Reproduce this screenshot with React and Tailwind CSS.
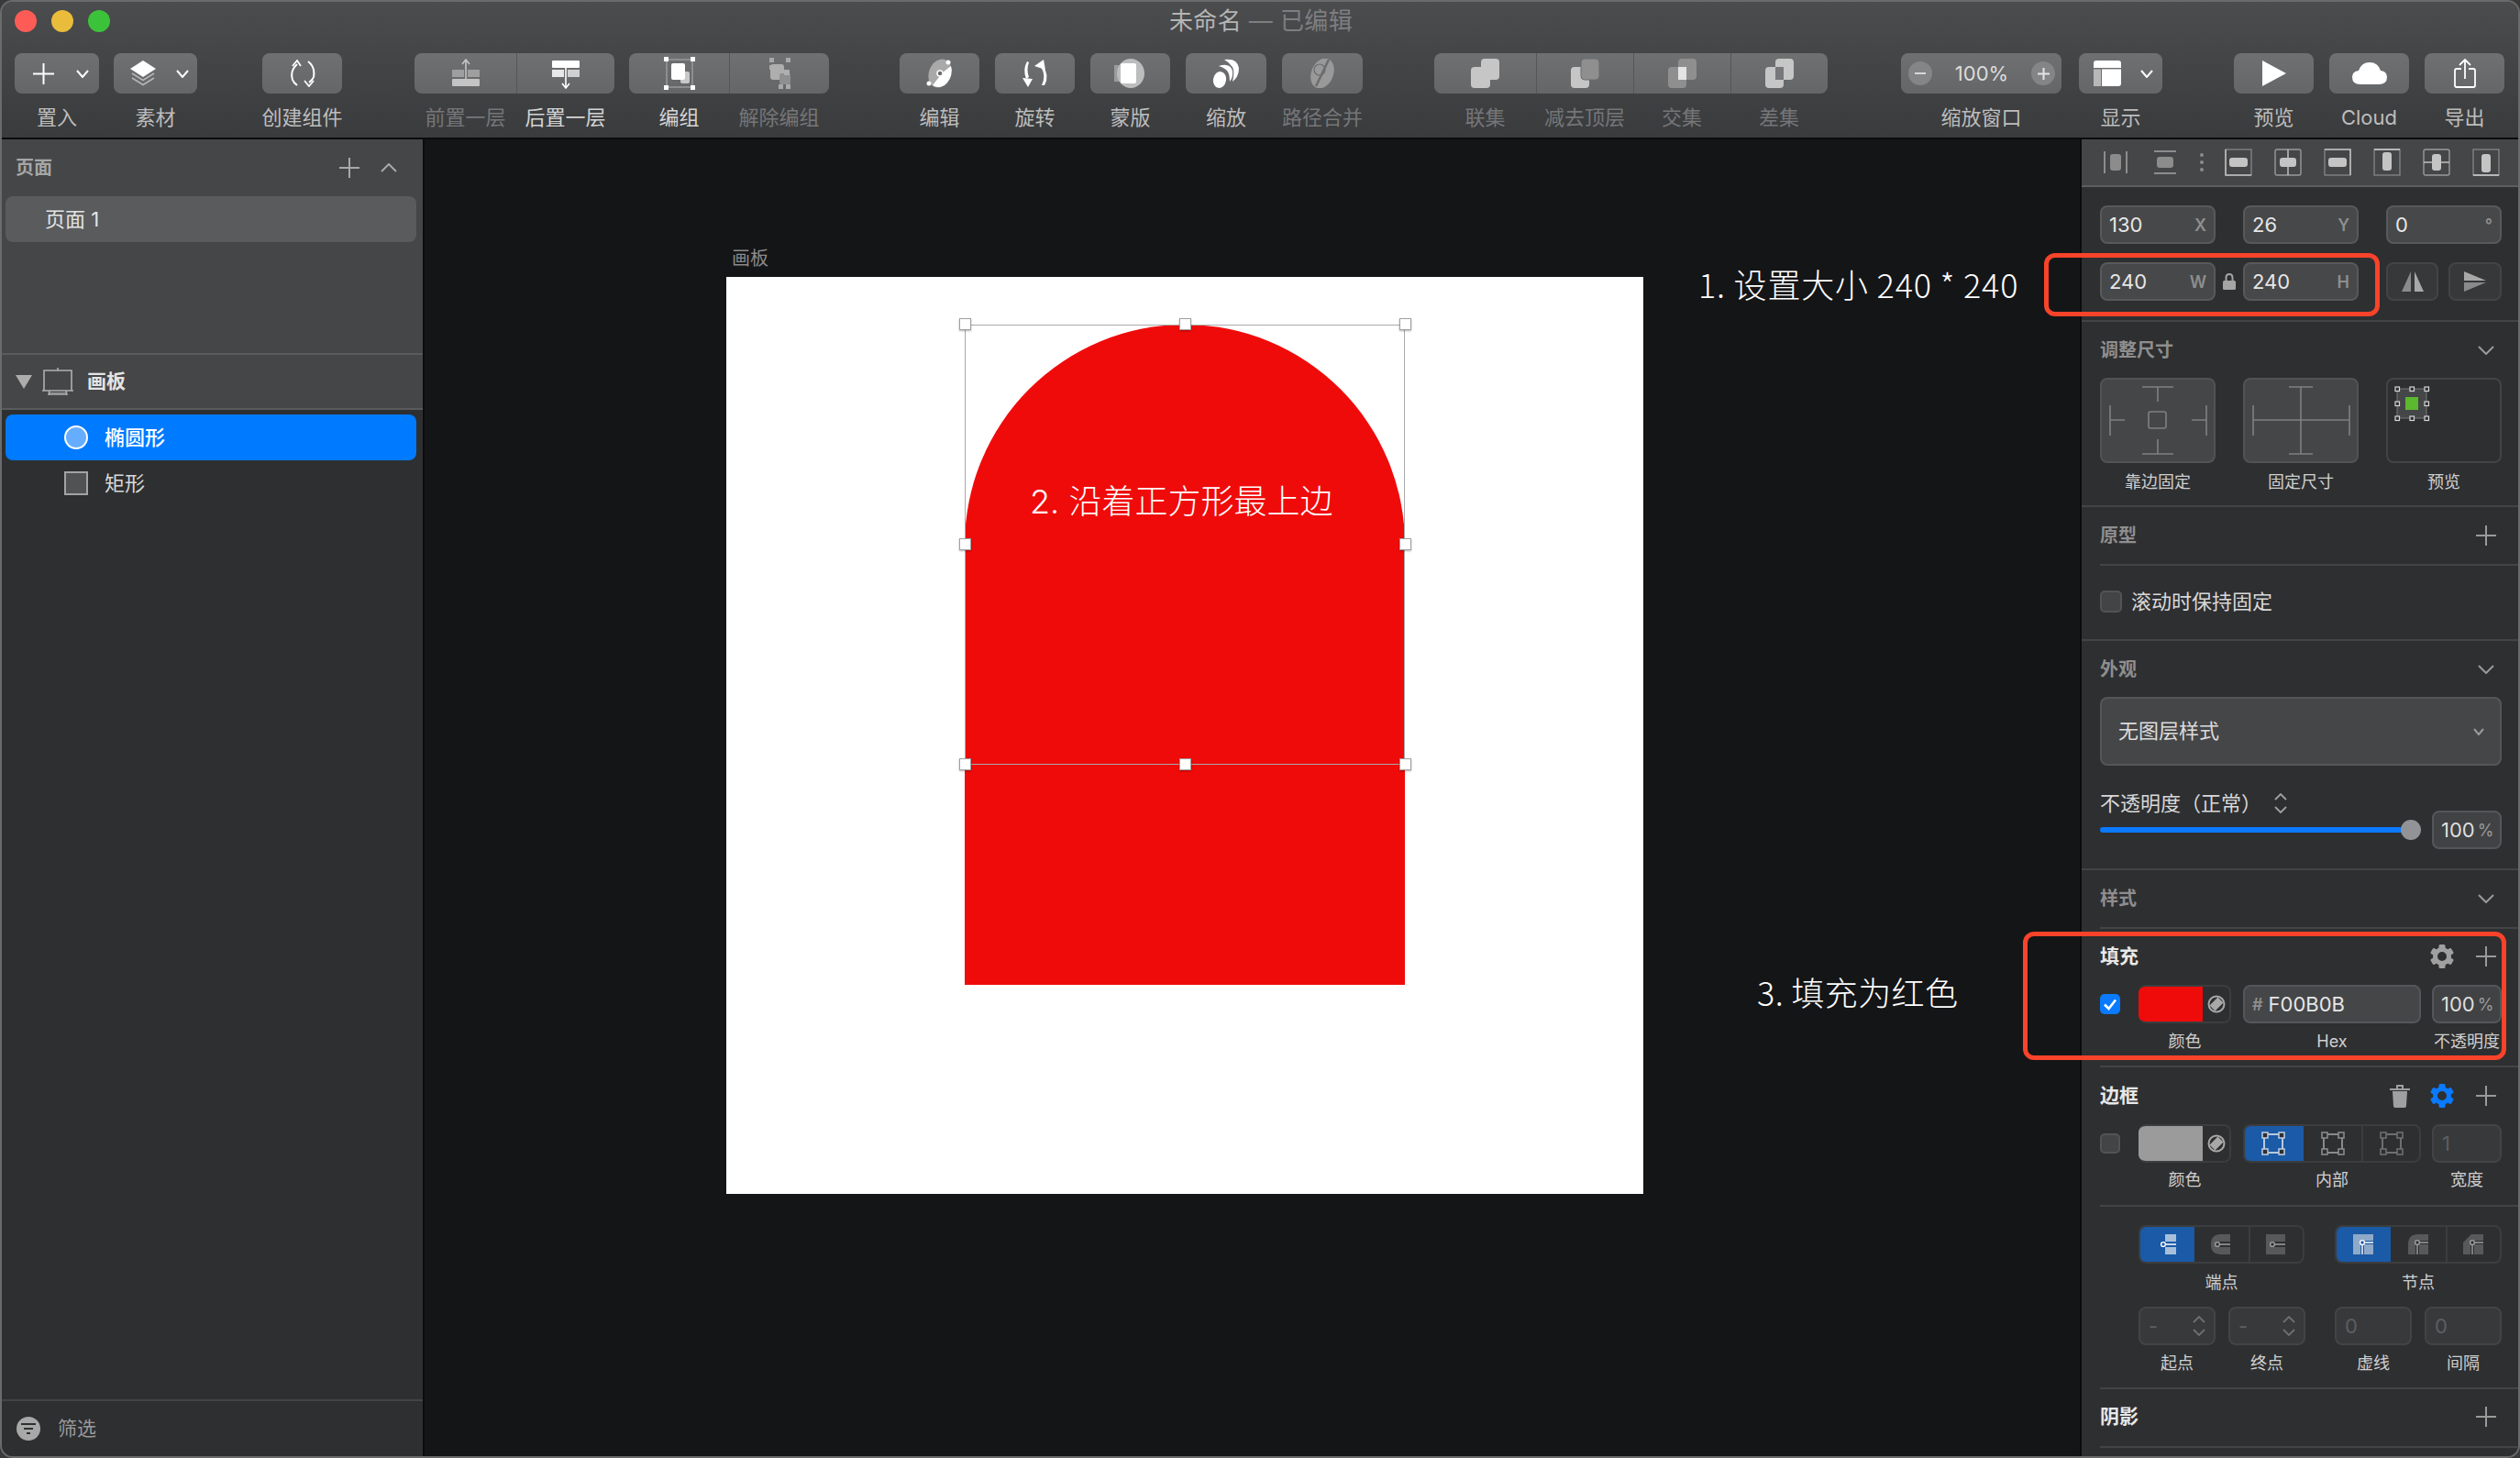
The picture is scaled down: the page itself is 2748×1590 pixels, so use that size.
import React from 'react';

const Svg = ({ s = 36, w, h, vb, children, className = '' }) => (
  <svg width={w || s} height={h || s} viewBox={vb || `0 0 ${w || s} ${h || s}`} fill="none" className={className}>{children}</svg>
);

const Plus = ({ c = '#a9a9a9', s = 22, sw = 2 }) => (
  <Svg s={s}><path d={`M${s / 2} 0V${s}M0 ${s / 2}H${s}`} stroke={c} strokeWidth={sw} /></Svg>
);
const PlusR = () => <div className="-mr-[2px] ml-[2px]"><Plus c="#9a9a9a" /></div>;
const Chev = ({ c = '#a9a9a9', w = 18, h = 10, sw = 2, up }) => (
  <Svg w={w} h={h}><path d={up ? `M1 ${h - 1}L${w / 2} 1L${w - 1} ${h - 1}` : `M1 1L${w / 2} ${h - 1}L${w - 1} 1`} stroke={c} strokeWidth={sw} /></Svg>
);
const UpDown = ({ c = '#a0a0a0' }) => (
  <Svg w={14} h={22}><path d="M1 7L7 1L13 7M1 15L7 21L13 15" stroke={c} strokeWidth="1.8" /></Svg>
);
const Gear = ({ c = '#a0a0a0' }) => (
  <Svg s={26}>
    <circle cx="13" cy="13" r="7.5" stroke={c} strokeWidth="5" />
    {[0, 60, 120, 180, 240, 300].map(a => (
      <rect key={a} x="9.5" y="0" width="7" height="6" rx="1.5" fill={c} transform={`rotate(${a} 13 13)`} />
    ))}
  </Svg>
);
const Trash = () => (
  <Svg w={22} h={26}>
    <path d="M0 6H22" stroke="#a0a0a0" strokeWidth="2" />
    <path d="M8 5V2H14V5" stroke="#a0a0a0" strokeWidth="2" />
    <path d="M3 8H19L18 24Q18 26 16 26H6Q4 26 4 24Z" fill="#a0a0a0" />
  </Svg>
);
const Chip = () => (
  <Svg s={20}>
    <circle cx="10" cy="10" r="8.5" stroke="#a8a8a8" strokeWidth="2" />
    <path d="M2.5 11.5L11.5 2.5L17.5 8.5L8.5 17.5Z" fill="#a8a8a8" />
  </Svg>
);
const Check = () => (
  <div className="w-[22px] h-[22px] rounded-[5px] bg-[#0a7aff] flex items-center justify-center shrink-0">
    <Svg s={16}><path d="M2 8.5L6.5 13L14 3.5" stroke="#fff" strokeWidth="2.6" /></Svg>
  </div>
);

const IconAdd = () => (
  <div className="flex items-center pl-[20px] gap-[24px]">
    <Plus c="#fff" s={23} />
    <Chev c="#fff" w={14} h={9} />
  </div>
);
const IconAssets = () => (
  <div className="flex items-center pl-[17px] gap-[21px]">
    <Svg w={30} h={28}>
      <path d="M15 0L29 9L15 18L1 9Z" fill="#fff" />
      <path d="M3 14L15 21.5L27 14M3 19L15 26.5L27 19" stroke="#b5b5b5" strokeWidth="1.6" />
    </Svg>
    <Chev c="#fff" w={14} h={9} />
  </div>
);
const IconSymbol = () => (
  <Svg w={30} h={30}>
    <path d="M9 5Q1 12 4 22Q5 25 9 28" stroke="#fff" strokeWidth="2" />
    <path d="M4 7L9 1L13 7" stroke="#fff" strokeWidth="1.8" />
    <path d="M21 2Q29 8 27 19Q26 22 22 25" stroke="#fff" strokeWidth="2" />
    <path d="M27 23L22 29L17 23" stroke="#fff" strokeWidth="1.8" />
  </Svg>
);
const IconForward = () => (
  <Svg s={34}>
    <rect x="2" y="23" width="30" height="8" rx="1" fill="#c4c4c4" />
    <rect x="2" y="13" width="13" height="8" fill="#9f9f9f" />
    <rect x="19" y="13" width="13" height="8" fill="#9f9f9f" />
    <path d="M17 23V2M13 7L17 2L21 7" stroke="#c4c4c4" strokeWidth="1.6" />
  </Svg>
);
const IconBackward = () => (
  <Svg s={34}>
    <rect x="2" y="3" width="30" height="8" rx="1" fill="#fff" />
    <rect x="2" y="13" width="13" height="8" fill="#e8e8e8" />
    <rect x="19" y="13" width="13" height="8" fill="#d0d0d0" />
    <path d="M17 11V33M13 28L17 33L21 28" stroke="#fff" strokeWidth="1.6" />
  </Svg>
);
const IconGroup = () => (
  <Svg w={34} h={36}>
    <rect x="3" y="3" width="28" height="30" stroke="#9d9d9d" strokeWidth="1.4" />
    <rect x="18" y="16" width="10" height="13" rx="2" fill="#c8c8c8" />
    <rect x="8" y="7" width="15" height="18" rx="2" fill="#fff" />
    {[[0, 0], [29, 0], [0, 31], [29, 31]].map(([x, y]) => <rect key={x + '-' + y} x={x} y={y} width="5" height="5" fill="#fff" />)}
  </Svg>
);
const IconUngroup = () => (
  <Svg w={34} h={36}>
    {[[6, 1], [24, 1], [6, 9], [24, 30], [16, 30]].map(([x, y]) => <rect key={x + '-' + y} x={x} y={y} width="5" height="5" fill="#a8a8a8" />)}
    <rect x="7" y="8" width="15" height="17" rx="3" fill="#aeaeae" />
    <rect x="17" y="18" width="12" height="12" rx="2" fill="#8f8f8f" />
    <rect x="22" y="14" width="6" height="6" fill="#aeaeae" />
  </Svg>
);
const IconEdit = () => (
  <Svg w={34} h={32}>
    <ellipse cx="17" cy="16" rx="12" ry="16" transform="rotate(22 17 16)" fill="#a9a9a9" />
    <path d="M29 8Q32 20 22 29Q15 33 9 29L20 15Z" fill="#fff" />
    <circle cx="17" cy="16" r="3" fill="#6a6b6d" stroke="#fff" strokeWidth="1.5" />
    <circle cx="26" cy="4" r="2.5" fill="#fff" />
    <circle cx="5" cy="27" r="2.5" fill="#fff" />
  </Svg>
);
const IconRotate = () => (
  <Svg w={32} h={32}>
    <path d="M9 4Q6 12 9 20L6 22Q2 12 7 3Z" fill="#fff" />
    <path d="M2 21L13 22L8 31Z" fill="#fff" />
    <path d="M22 9Q28 18 23 29L26 29Q32 18 24 8Z" fill="#fff" />
    <path d="M15 8L25 1L27 12Z" fill="#fff" />
  </Svg>
);
const IconMask = () => (
  <Svg w={36} h={32}>
    <rect x="0" y="7" width="8" height="18" fill="#9b9b9b" />
    <ellipse cx="18" cy="16" rx="15" ry="16" fill="#bdbdbd" />
    <rect x="7" y="5" width="17" height="22" rx="2" fill="#fff" />
  </Svg>
);
const IconScale = () => (
  <Svg w={32} h={32}>
    <path d="M14 1Q28 -1 30 10Q30 20 23 25Q26 12 22 8Q18 3 14 1Z" fill="#fff" />
    <path d="M8 8Q20 4 23 13Q24 20 20 25Q20 15 16 12Q12 9 8 8Z" fill="#fff" />
    <ellipse cx="9" cy="23" rx="7" ry="9" transform="rotate(10 9 23)" fill="#fff" />
  </Svg>
);
const IconCombine = () => (
  <Svg w={34} h={32}>
    <ellipse cx="17" cy="16" rx="12" ry="17" transform="rotate(22 17 16)" fill="#999" />
    <path d="M24 1L10 30" stroke="#6b6c6e" strokeWidth="2.5" />
    <circle cx="14" cy="12" r="6" stroke="#6b6c6e" strokeWidth="1.2" />
  </Svg>
);
const Bool = ({ type }) => {
  const a = '#c6c6c6', b = '#8f8f8f';
  return (
    <Svg w={32} h={32}>
      {type === 'union' && <>
        <rect x="11" y="0" width="20" height="23" rx="4" fill={a} />
        <rect x="0" y="9" width="21" height="23" rx="4" fill={a} />
      </>}
      {type === 'sub' && <>
        <rect x="0" y="9" width="20" height="23" rx="4" fill={a} />
        <rect x="11" y="0" width="20" height="23" rx="4" fill={b} stroke="#6b6c6e" strokeWidth="1" />
      </>}
      {type === 'int' && <>
        <rect x="0" y="9" width="20" height="23" rx="4" fill={b} />
        <rect x="11" y="0" width="20" height="23" rx="4" fill={b} />
        <rect x="11" y="9" width="9" height="14" fill="#e4e4e4" />
      </>}
      {type === 'diff' && <>
        <rect x="0" y="9" width="20" height="23" rx="4" fill={a} />
        <rect x="11" y="0" width="20" height="23" rx="4" fill={a} />
        <rect x="11" y="9" width="9" height="14" fill="#77787a" />
      </>}
    </Svg>
  );
};
const IconZoom = () => (
  <div className="flex items-center w-full pl-[8px] pr-[7px] justify-between">
    <div className="w-[26px] h-[26px] rounded-full bg-[#848587] flex items-center justify-center"><div className="w-[12px] h-[2px] bg-[#d8d8d8]" /></div>
    <span className="text-[22px] text-[#dcdcdc]">100%</span>
    <div className="w-[26px] h-[26px] rounded-full bg-[#848587] flex items-center justify-center"><Plus c="#e4e4e4" s={13} /></div>
  </div>
);
const IconView = () => (
  <div className="flex items-center pl-[16px] gap-[21px]">
    <Svg w={30} h={28}>
      <rect x="0" y="0" width="30" height="28" rx="3" fill="#fff" />
      <rect x="0" y="9" width="8" height="19" fill="#b8b8b8" />
      <rect x="8" y="8" width="1" height="20" fill="#6b6c6e" />
      <rect x="0" y="8" width="30" height="1.4" fill="#6b6c6e" />
    </Svg>
    <Chev c="#fff" w={14} h={9} />
  </div>
);
const IconPlay = () => <Svg w={26} h={28}><path d="M0 0L26 14L0 28Z" fill="#fff" /></Svg>;
const IconCloud = () => (
  <Svg w={38} h={24}>
    <path d="M9 24Q0 24 0 16Q0 10 7 9Q10 0 19 0Q28 0 31 9Q38 10 38 16Q38 24 29 24Z" fill="#fff" />
  </Svg>
);
const IconShare = () => (
  <Svg w={24} h={32}>
    <path d="M12 22V1M6 7L12 1L18 7" stroke="#fff" strokeWidth="1.8" />
    <path d="M8 11H3Q1 11 1 13V29Q1 31 3 31H21Q23 31 23 29V13Q23 11 21 11H16" stroke="#fff" strokeWidth="1.8" />
  </Svg>
);

const Group = ({ className = '', cells, rounded = 'rounded-[8px]' }) => (
  <div className={`flex flex-col shrink-0 ${className}`}>
    <div className={`flex h-[44px] ${rounded} overflow-hidden bg-gradient-to-b from-[#6f7072] to-[#656668]`}>
      {cells.map((c, i) => (
        <div key={i} className={`${c.w} h-full flex items-center ${c.left ? 'justify-start' : 'justify-center'} ${i > 0 ? 'border-l border-[#555658]' : ''}`}>{c.icon}</div>
      ))}
    </div>
    <div className="flex mt-[13px]">
      {cells.map((c, i) => (
        <div key={i} className={`${c.w} flex justify-center whitespace-nowrap text-[22px] leading-[26px] ${c.tone || 'text-[#bdbdbd]'}`}>{c.label}</div>
      ))}
    </div>
  </div>
);

const dim = 'text-[#757678]';
const bright = 'text-[#d4d4d4]';

const Toolbar = () => (
  <div className="h-[150px] shrink-0 bg-gradient-to-b from-[#4b4c4e] to-[#3a3b3d] border-b-2 border-[#0c0c0d]">
    <div className="grid grid-cols-[1fr_auto_1fr] items-center h-[42px]">
      <div className="flex gap-[16px] pl-[14px]">
        <div className="w-[24px] h-[24px] rounded-full bg-[#fd5c56]" />
        <div className="w-[24px] h-[24px] rounded-full bg-[#e9bd3b]" />
        <div className="w-[24px] h-[24px] rounded-full bg-[#3cc23a]" />
      </div>
      <div className="text-[26px] leading-[32px] whitespace-nowrap ml-[2px] tracking-[0.4px] text-[#7d7e80]"><span className="text-[#b4b4b4]">未命名</span> — 已编辑</div>
      <div />
    </div>
    <div className="flex pl-[14px] pt-[14px]">
      <Group cells={[{ w: 'w-[92px]', left: 1, icon: <IconAdd />, label: '置入' }]} />
      <Group className="ml-[16px]" cells={[{ w: 'w-[91px]', left: 1, icon: <IconAssets />, label: '素材' }]} />
      <Group className="ml-[71px]" cells={[{ w: 'w-[87px]', icon: <IconSymbol />, label: '创建组件' }]} />
      <Group className="ml-[79px]" cells={[
        { w: 'w-[111px]', icon: <IconForward />, label: '前置一层', tone: dim },
        { w: 'w-[107px]', icon: <IconBackward />, label: '后置一层', tone: bright },
      ]} />
      <Group className="ml-[16px]" cells={[
        { w: 'w-[109px]', icon: <IconGroup />, label: '编组', tone: bright },
        { w: 'w-[109px]', icon: <IconUngroup />, label: '解除编组', tone: dim },
      ]} />
      <Group className="ml-[77px]" cells={[{ w: 'w-[87px]', icon: <IconEdit />, label: '编辑' }]} />
      <Group className="ml-[17px]" cells={[{ w: 'w-[87px]', icon: <IconRotate />, label: '旋转' }]} />
      <Group className="ml-[17px]" cells={[{ w: 'w-[87px]', icon: <IconMask />, label: '蒙版' }]} />
      <Group className="ml-[17px]" cells={[{ w: 'w-[88px]', icon: <IconScale />, label: '缩放' }]} />
      <Group className="ml-[17px]" cells={[{ w: 'w-[88px]', icon: <IconCombine />, label: '路径合并', tone: dim }]} />
      <Group className="ml-[78px]" cells={[
        { w: 'w-[111px]', icon: <Bool type="union" />, label: '联集', tone: dim },
        { w: 'w-[106px]', icon: <Bool type="sub" />, label: '减去顶层', tone: dim },
        { w: 'w-[106px]', icon: <Bool type="int" />, label: '交集', tone: dim },
        { w: 'w-[106px]', icon: <Bool type="diff" />, label: '差集', tone: dim },
      ]} />
      <Group className="ml-[80px]" cells={[{ w: 'w-[175px]', icon: <IconZoom />, label: '缩放窗口' }]} />
      <Group className="ml-[19px]" cells={[{ w: 'w-[91px]', left: 1, icon: <IconView />, label: '显示' }]} />
      <Group className="ml-[78px]" cells={[{ w: 'w-[87px]', icon: <IconPlay />, label: '预览' }]} />
      <Group className="ml-[17px]" cells={[{ w: 'w-[87px]', icon: <IconCloud />, label: 'Cloud' }]} />
      <Group className="ml-[17px]" cells={[{ w: 'w-[87px]', icon: <IconShare />, label: '导出' }]} />
    </div>
  </div>
);

const LeftPanel = () => (
  <div className="w-[459px] shrink-0 flex flex-col border-r-2 border-[#0c0c0d] box-content">
    <div className="h-[233px] bg-[#454648] border-b-2 border-[#5a5b5d] box-content pl-[4px] pr-[7px]">
      <div className="h-[62px] flex items-center justify-between pl-[11px] pr-[21px]">
        <span className="text-[20px] font-semibold text-[#a6a6a6]">页面</span>
        <div className="flex items-center gap-[23px]"><Plus /><Chev up /></div>
      </div>
      <div className="h-[50px] rounded-[8px] bg-[#5a5b5d] flex items-center pl-[43px] text-[22px] text-[#e4e4e4]">页面 1</div>
    </div>
    <div className="h-[58px] bg-[#454648] border-b-2 border-[#5a5b5d] box-content flex items-center pl-[15px]">
      <Svg w={18} h={15} className="mr-[11px]"><path d="M0 0H18L9 15Z" fill="#adadad" /></Svg>
      <Svg w={34} h={30} className="mr-[15px]">
        <path d="M2 25V3H32V25M0 25H34M17 3V0M8 25L7 30H27L26 25M8 28H26" stroke="#b0b0b0" strokeWidth="1.6" />
      </Svg>
      <span className="text-[21px] font-semibold text-[#e4e4e4]">画板</span>
    </div>
    <div className="flex-1 bg-[#2e2f31] pl-[4px] pr-[7px] pt-[5px]">
      <div className="h-[50px] rounded-[8px] bg-[#007aff] flex items-center pl-[64px] gap-[18px] text-[22px] font-medium text-white">
        <div className="w-[26px] h-[26px] rounded-full bg-[#66adff] border-2 border-white" />
        <span>椭圆形</span>
      </div>
      <div className="h-[50px] flex items-center pl-[64px] gap-[18px] text-[22px] text-[#d8d8d8]">
        <div className="w-[26px] h-[26px] bg-[#515254] border-2 border-[#a3a3a3]" />
        <span>矩形</span>
      </div>
    </div>
    <div className="h-[62px] bg-[#2e2f31] border-t-2 border-[#434446] flex items-center pl-[16px] gap-[19px]">
      <div className="w-[26px] h-[26px] rounded-full bg-[#a8a8a8] flex items-center justify-center">
        <Svg w={16} h={12}><path d="M0 1H16M3 6H13M6 11H10" stroke="#2e2f31" strokeWidth="2" /></Svg>
      </div>
      <span className="text-[21px] text-[#9a9a9a]">筛选</span>
    </div>
  </div>
);

const handles = [
  'left-[254px] top-[45px]', 'left-[494px] top-[45px]', 'left-[734px] top-[45px]',
  'left-[254px] top-[285px]', 'left-[734px] top-[285px]',
  'left-[254px] top-[525px]', 'left-[494px] top-[525px]', 'left-[734px] top-[525px]',
];

const Canvas = () => (
  <div className="flex-1 relative bg-[#141517]">
    <div className="absolute left-[335px] top-[116px] text-[20px] leading-[28px] text-[#8a8a8a]">画板</div>
    <div className="absolute left-[329px] top-[150px] w-[1000px] h-[1000px] bg-white">
      <div className="absolute left-[260px] top-[292px] w-[480px] h-[480px] bg-[#f00b0b]" />
      <div className="absolute left-[260px] top-[52px] w-[480px] h-[480px] rounded-full bg-[#f00b0b]" />
      <div className="absolute left-[260px] top-[52px] w-[480px] h-[480px] border border-[#a9a9a9]" />
      {handles.map(h => (
        <div key={h} className={`absolute ${h} w-[13px] h-[13px] bg-white border border-[#a0a0a0] shadow-[0_1px_2px_rgba(0,0,0,0.3)]`} />
      ))}
      <div className="absolute left-[331px] top-[223px] text-[36px] leading-[44px] text-white whitespace-nowrap font-light">2. 沿着正方形最上边</div>
    </div>
  </div>
);

const Field = ({ v, s, w = 'w-[126px]', className = '' }) => (
  <div className={`${w} h-[42px] shrink-0 rounded-[8px] bg-[#474849] border-2 border-[#59595b] flex items-center justify-between pl-[8px] pr-[8px] text-[22px] text-[#e6e6e6] ${className}`}>
    <span>{v}</span>
    {s && <span className="text-[18px] font-semibold text-[#8e8e8e]">{s}</span>}
  </div>
);
const Percent = () => (
  <div className="w-[76px] h-[42px] shrink-0 rounded-[8px] bg-[#414244] border-2 border-[#55565a] flex items-center pl-[8px] text-[22px] text-[#dedede]">100<span className="text-[18px] text-[#9a9a9a] ml-[3px]">%</span></div>
);
const Small = ({ w, children, className = '' }) => (
  <div className={`${w} text-center text-[18px] leading-[24px] text-[#d0d0d0] whitespace-nowrap shrink-0 ${className}`}>{children}</div>
);
const Head = ({ title, bright: b, h = 'h-[62px]', right }) => (
  <div className={`${h} flex items-center justify-between pl-[20px] pr-[26px]`}>
    <span className={`font-semibold ${b ? 'text-[#e8e8e8] text-[21px]' : 'text-[#8e8e8e] text-[20px]'}`}>{title}</span>
    <div className="flex items-center gap-[22px]">{right}</div>
  </div>
);
const Align = ({ children, w = 'w-[54px]' }) => <div className={`${w} flex items-center justify-center`}>{children}</div>;
const Inner = () => <div className="ml-[20px] h-[2px] bg-[#434446] shrink-0" />;
const Outer = () => <div className="h-[2px] bg-[#434446] shrink-0" />;

const RightChev = () => <Chev c="#9a9a9a" />;

const c1 = '#a5a5a5';
const AlignBox = ({ children }) => <Svg s={30}>{children}</Svg>;

const Seg = ({ className = '', cells }) => (
  <div className={`flex h-[42px] rounded-[8px] border-2 border-[#3c3d3f] overflow-hidden shrink-0 ${className}`}>
    {cells.map((c, i) => (
      <div key={i} className={`${c.w} flex items-center justify-center ${c.on ? 'bg-[#1a5aa6] -my-[2px] -ml-[2px]' : ''} ${i === 2 ? 'border-l-2 border-[#3c3d3f]' : ''}`}>{c.icon}</div>
    ))}
  </div>
);
const BorderPos = ({ c }) => (
  <Svg s={26}>
    <rect x="3" y="3" width="20" height="20" stroke={c} strokeWidth="2" />
    {[[1, 1], [19, 1], [1, 19], [19, 19]].map(([x, y]) => <rect key={x + '-' + y} x={x} y={y} width="6" height="6" fill="#2e2f31" stroke={c} strokeWidth="1.6" />)}
  </Svg>
);
const Cap = ({ kind, on }) => {
  const f = on ? '#a8bfdb' : '#58595b';
  const l = on ? '#fff' : '#a0a0a0';
  return (
    <Svg s={24}>
      {kind === 'butt' && <path d="M10 1H22V23H10V15H22V9H10Z" fill={f} />}
      {kind === 'round' && <path d="M22 1H12Q1 1 1 12Q1 23 12 23H22V15H10V9H22Z" fill={f} />}
      {kind === 'square' && <path d="M1 1H22V9H10V15H22V23H1Z" fill={f} />}
      <path d="M10 12H22" stroke={l} strokeWidth="1.6" />
      <circle cx="8" cy="12" r="2.4" fill={on ? '#1a5aa6' : '#2e2f31'} stroke={l} strokeWidth="1.4" />
    </Svg>
  );
};
const Join = ({ kind, on }) => {
  const f = on ? '#8fa9c9' : '#58595b';
  const l = on ? '#fff' : '#a0a0a0';
  const d = kind === 'miter' ? 'M1 1H23V23H1Z' : kind === 'round' ? 'M12 1H23V23H1V12Q1 1 12 1Z' : 'M10 1H23V23H1V10Z';
  return (
    <Svg s={24}>
      <path d={d} fill={f} />
      <path d="M11 10H23M11 10V23" stroke={on ? '#1a5aa6' : '#2e2f31'} strokeWidth="4" />
      <path d="M11 10H23M11 12V23" stroke={l} strokeWidth="1.4" />
      <circle cx="11" cy="10" r="2.4" fill={on ? '#1a5aa6' : '#2e2f31'} stroke={l} strokeWidth="1.4" />
    </Svg>
  );
};
const Disabled = ({ v, arrows }) => (
  <div className="w-[84px] h-[42px] shrink-0 rounded-[8px] bg-[#38393b] border-2 border-[#434446] flex items-center justify-between pl-[9px] pr-[9px] text-[22px] text-[#5d5e60]">
    <span>{v}</span>
    {arrows && <UpDown c="#6e6f71" />}
  </div>
);

const RightPanel = () => (
  <div className="w-[476px] shrink-0 flex flex-col bg-[#2e2f31] border-l-2 border-[#0c0c0d] box-content overflow-hidden">
    <div className="h-[50px] shrink-0 bg-[#454648] border-b-2 border-[#5d5e60] box-content flex items-center pl-[10px]">
      <Align><AlignBox><path d="M3 3V27M27 3V27" stroke={c1} strokeWidth="1.5" /><rect x="9" y="6" width="12" height="18" rx="3" fill="#8c8c8c" /></AlignBox></Align>
      <Align><AlignBox><path d="M3 3H27M3 27H27" stroke={c1} strokeWidth="1.5" /><rect x="6" y="9" width="18" height="12" rx="3" fill="#8c8c8c" /></AlignBox></Align>
      <Align w="w-[26px]"><div className="flex flex-col gap-[4px]">{[0, 1, 2].map(i => <div key={i} className="w-[4px] h-[4px] rounded-full bg-[#8c8c8c]" />)}</div></Align>
      <Align><AlignBox><rect x="1" y="1" width="28" height="28" stroke="#8c8c8c" strokeWidth="1.2" /><path d="M1 1V29H29" stroke="#c0c0c0" strokeWidth="1.5" /><rect x="5" y="10" width="20" height="10" rx="3" fill="#c4c4c4" /></AlignBox></Align>
      <Align><AlignBox><rect x="1" y="1" width="28" height="28" rx="2" stroke="#9a9a9a" strokeWidth="1.4" /><path d="M15 1V29" stroke="#c0c0c0" strokeWidth="1.5" /><rect x="6" y="10" width="18" height="10" rx="3" fill="#c4c4c4" /></AlignBox></Align>
      <Align><AlignBox><rect x="1" y="1" width="28" height="28" stroke="#8c8c8c" strokeWidth="1.2" /><path d="M1 1H29V29" stroke="#c0c0c0" strokeWidth="1.5" /><rect x="5" y="10" width="20" height="10" rx="3" fill="#c4c4c4" /></AlignBox></Align>
      <Align><AlignBox><rect x="1" y="1" width="28" height="28" stroke="#8c8c8c" strokeWidth="1.2" /><path d="M1 1H29" stroke="#d0d0d0" strokeWidth="1.5" /><rect x="10" y="4" width="10" height="20" rx="3" fill="#c4c4c4" /></AlignBox></Align>
      <Align><AlignBox><rect x="1" y="1" width="28" height="28" rx="2" stroke="#9a9a9a" strokeWidth="1.4" /><path d="M1 15H29" stroke="#c0c0c0" strokeWidth="1.5" /><rect x="10" y="6" width="10" height="18" rx="3" fill="#c4c4c4" /></AlignBox></Align>
      <Align><AlignBox><rect x="1" y="1" width="28" height="28" stroke="#8c8c8c" strokeWidth="1.2" /><path d="M1 29H29" stroke="#d0d0d0" strokeWidth="1.5" /><rect x="10" y="6" width="10" height="20" rx="3" fill="#c4c4c4" /></AlignBox></Align>
    </div>
    <div className="h-[145px] shrink-0 pt-[20px] pl-[20px] flex flex-col gap-[20px]">
      <div className="flex gap-[30px]">
        <Field v="130" s="X" />
        <Field v="26" s="Y" />
        <Field v="0" s="°" />
      </div>
      <div className="flex">
        <Field v="240" s="W" />
        <div className="w-[30px] flex items-center justify-center">
          <Svg w={14} h={18}><path d="M3.5 8V5Q3.5 1 7 1Q10.5 1 10.5 5V8" stroke="#a5a5a5" strokeWidth="2" /><rect x="0" y="8" width="14" height="10" rx="1.5" fill="#a5a5a5" /></Svg>
        </div>
        <Field v="240" s="H" />
        <div className="w-[57px] h-[42px] ml-[30px] rounded-[8px] bg-[#37383a] border-2 border-[#434446] flex items-center justify-center">
          <Svg w={24} h={22}><path d="M10 0V22H0Z" fill="#8a8a8a" /><path d="M14 0V22H24Z" fill="#a8a8a8" /></Svg>
        </div>
        <div className="w-[58px] h-[42px] ml-[11px] rounded-[8px] bg-[#37383a] border-2 border-[#434446] flex items-center justify-center">
          <Svg w={24} h={22}><path d="M0 0L24 10H0Z" fill="#a8a8a8" /><path d="M0 22L24 12H0Z" fill="#8a8a8a" /></Svg>
        </div>
      </div>
    </div>
    <Outer />
    <div className="h-[200px] shrink-0 flex flex-col">
      <Head title="调整尺寸" h="h-[61px]" right={<RightChev />} />
      <div className="flex gap-[30px] pl-[20px]">
        <div className="w-[126px] h-[93px] rounded-[8px] bg-[#454648] border-2 border-[#525355]">
          <Svg w={122} h={89}>
            <path d="M44 8H78M61 8V24M44 81H78M61 65V81M9 28V61M9 44H25M114 28V61M98 44H114" stroke="#808082" strokeWidth="1.6" />
            <rect x="51" y="35" width="19" height="18" rx="2" stroke="#808082" strokeWidth="1.6" />
          </Svg>
        </div>
        <div className="w-[126px] h-[93px] rounded-[8px] bg-[#454648] border-2 border-[#525355]">
          <Svg w={122} h={89}>
            <path d="M48 8H74M61 8V81M48 81H74M9 28V61M9 44H114M114 28V61" stroke="#808082" strokeWidth="1.6" />
          </Svg>
        </div>
        <div className="w-[126px] h-[93px] rounded-[8px] border-2 border-[#434446]">
          <Svg w={60} h={60}>
            <rect x="10" y="10" width="32" height="32" fill="#454648" stroke="#77787a" strokeWidth="1" />
            <rect x="19" y="19" width="14" height="14" fill="#5cb82e" />
            {[10, 26, 42].flatMap(x => [10, 26, 42].filter(y => !(x === 26 && y === 26)).map(y => (
              <rect key={x + '-' + y} x={x - 2} y={y - 2} width="4.5" height="4.5" fill="#2e2f31" stroke="#d8d8d8" strokeWidth="1.2" />
            )))}
          </Svg>
        </div>
      </div>
      <div className="flex gap-[30px] pl-[20px] mt-[9px]">
        <Small w="w-[126px]">靠边固定</Small>
        <Small w="w-[126px]">固定尺寸</Small>
        <Small w="w-[126px]">预览</Small>
      </div>
    </div>
    <Outer />
    <div className="h-[144px] shrink-0">
      <Head title="原型" right={<PlusR />} />
      <Inner />
      <div className="h-[78px] flex items-center pl-[20px] gap-[10px] text-[22px] text-[#d8d8d8]">
        <div className="w-[24px] h-[24px] rounded-[5px] bg-[#434446] border-2 border-[#525355]" />
        <span>滚动时保持固定</span>
      </div>
    </div>
    <Outer />
    <div className="h-[248px] shrink-0 pl-[20px] pr-[18px]">
      <div className="h-[61px] flex items-center justify-between pr-[8px]">
        <span className="text-[20px] font-semibold text-[#8e8e8e]">外观</span>
        <RightChev />
      </div>
      <div className="h-[75px] rounded-[8px] bg-[#454648] border-2 border-[#555658] flex items-center justify-between pl-[18px] pr-[17px] text-[22px] text-[#dcdcdc]">
        <span>无图层样式</span>
        <Chev c="#9a9a9a" w={12} h={8} />
      </div>
      <div className="h-[30px] mt-[26px] flex items-center text-[22px] text-[#d8d8d8] whitespace-nowrap">
        <span>不透明度（正常）</span>
        <span className="ml-[14px]"><UpDown /></span>
      </div>
      <div className="flex items-center -mt-[7px]">
        <div className="flex-1 h-[6px] rounded-full bg-[#0a7aff]" />
        <div className="w-[22px] h-[22px] rounded-full bg-[#929396] -ml-[2px] mr-[12px]" />
        <Percent />
      </div>
    </div>
    <Outer />
    <div className="h-[62px] shrink-0 flex items-center justify-between pl-[20px] pr-[26px]">
      <span className="text-[20px] font-semibold text-[#8e8e8e]">样式</span>
      <RightChev />
    </div>
    <Inner />
    <div className="h-[149px] shrink-0">
      <Head title="填充" bright h="h-[59px] mb-[2px]" right={<><Gear /><PlusR /></>} />
      <div className="flex items-center pl-[20px]">
        <Check />
        <div className="ml-[20px] w-[101px] h-[42px] flex rounded-[8px] overflow-hidden border-2 border-[#3c3d3f] border-l-0 shrink-0">
          <div className="w-[70px] -my-[2px] bg-[#f00b0b] rounded-l-[8px]" />
          <div className="flex-1 flex items-center justify-center"><Chip /></div>
        </div>
        <div className="ml-[13px] w-[194px] h-[42px] rounded-[8px] bg-[#454648] border-2 border-[#55565a] flex items-center pl-[8px] text-[22px] text-[#e6e6e6]">
          <span className="text-[18px] text-[#8e8e8e] mr-[6px] font-semibold">#</span>F00B0B
        </div>
        <div className="ml-[12px]"><Percent /></div>
      </div>
      <div className="flex pl-[62px] mt-[8px]">
        <Small w="w-[101px]">颜色</Small>
        <Small w="w-[194px]" className="ml-[13px]">Hex</Small>
        <Small w="w-[76px]" className="ml-[12px]">不透明度</Small>
      </div>
    </div>
    <Inner />
    <div className="h-[150px] shrink-0">
      <Head title="边框" bright right={<><Trash /><Gear c="#0a7aff" /><PlusR /></>} />
      <div className="flex items-center pl-[20px]">
        <div className="w-[22px] h-[22px] rounded-[5px] bg-[#434446] border-2 border-[#525355] shrink-0" />
        <div className="ml-[20px] w-[101px] h-[42px] flex rounded-[8px] overflow-hidden border-2 border-[#3c3d3f] border-l-0 shrink-0">
          <div className="w-[70px] -my-[2px] bg-[#9b9b9b] rounded-l-[8px]" />
          <div className="flex-1 flex items-center justify-center"><Chip /></div>
        </div>
        <Seg className="ml-[13px] w-[194px]" cells={[
          { w: 'w-[66px]', on: 1, icon: <BorderPos c="#b9c9de" /> },
          { w: 'w-[63px]', icon: <BorderPos c="#8a8a8a" /> },
          { w: 'w-[63px]', icon: <BorderPos c="#6e6f71" /> },
        ]} />
        <div className="ml-[12px] w-[76px] h-[42px] rounded-[8px] bg-[#38393b] border-2 border-[#434446] flex items-center pl-[9px] text-[22px] text-[#5d5e60]">1</div>
      </div>
      <div className="flex pl-[62px] mt-[7px]">
        <Small w="w-[101px]">颜色</Small>
        <Small w="w-[194px]" className="ml-[13px]">内部</Small>
        <Small w="w-[76px]" className="ml-[12px]">宽度</Small>
      </div>
    </div>
    <Inner />
    <div className="h-[197px] shrink-0 pl-[62px] pt-[20px]">
      <div className="flex gap-[33px]">
        <Seg className="w-[181px]" cells={[
          { w: 'w-[62px]', on: 1, icon: <Cap kind="butt" on /> },
          { w: 'w-[59px]', icon: <Cap kind="round" /> },
          { w: 'w-[60px]', icon: <Cap kind="square" /> },
        ]} />
        <Seg className="w-[182px]" cells={[
          { w: 'w-[62px]', on: 1, icon: <Join kind="miter" on /> },
          { w: 'w-[60px]', icon: <Join kind="round" /> },
          { w: 'w-[60px]', icon: <Join kind="bevel" /> },
        ]} />
      </div>
      <div className="flex gap-[33px] mt-[9px]">
        <Small w="w-[181px]">端点</Small>
        <Small w="w-[182px]">节点</Small>
      </div>
      <div className="flex mt-[14px]">
        <Disabled v="-" arrows />
        <div className="ml-[14px]"><Disabled v="-" arrows /></div>
        <div className="ml-[32px]"><Disabled v="0" /></div>
        <div className="ml-[14px]"><Disabled v="0" /></div>
      </div>
      <div className="flex mt-[8px]">
        <Small w="w-[84px]">起点</Small>
        <Small w="w-[84px]" className="ml-[14px]">终点</Small>
        <Small w="w-[84px]" className="ml-[32px]">虚线</Small>
        <Small w="w-[84px]" className="ml-[14px]">间隔</Small>
      </div>
    </div>
    <Inner />
    <Head title="阴影" bright h="h-[60px] mb-[2px]" right={<PlusR />} />
    <Inner />
  </div>
);

export default function App() {
  return (
    <div className="relative w-[2748px] h-[1590px] bg-[#3a3a3a] overflow-hidden font-[Inter,'Noto_Sans_CJK_SC',sans-serif]">
      <div className="w-full h-full flex flex-col rounded-[14px] overflow-hidden border-2 border-[#6a6b6d]">
        <Toolbar />
        <div className="flex-1 flex min-h-0">
          <LeftPanel />
          <Canvas />
          <RightPanel />
        </div>
      </div>
      <div className="absolute left-[1852px] top-[285px] text-[36px] leading-[48px] font-light tracking-[0.8px] text-white whitespace-nowrap font-['Noto_Sans_CJK_SC',sans-serif]">1. 设置大小 240 * 240</div>
      <div className="absolute left-[1916px] top-[1057px] text-[36px] leading-[48px] font-light tracking-[0.4px] text-white whitespace-nowrap font-['Noto_Sans_CJK_SC',sans-serif]">3. 填充为红色</div>
      <div className="absolute left-[2229px] top-[276px] w-[366px] h-[69px] rounded-[12px] border-[5px] border-[#f9432a]" />
      <div className="absolute left-[2206px] top-[1016px] w-[527px] h-[140px] rounded-[12px] border-[5px] border-[#f9432a]" />
    </div>
  );
}
